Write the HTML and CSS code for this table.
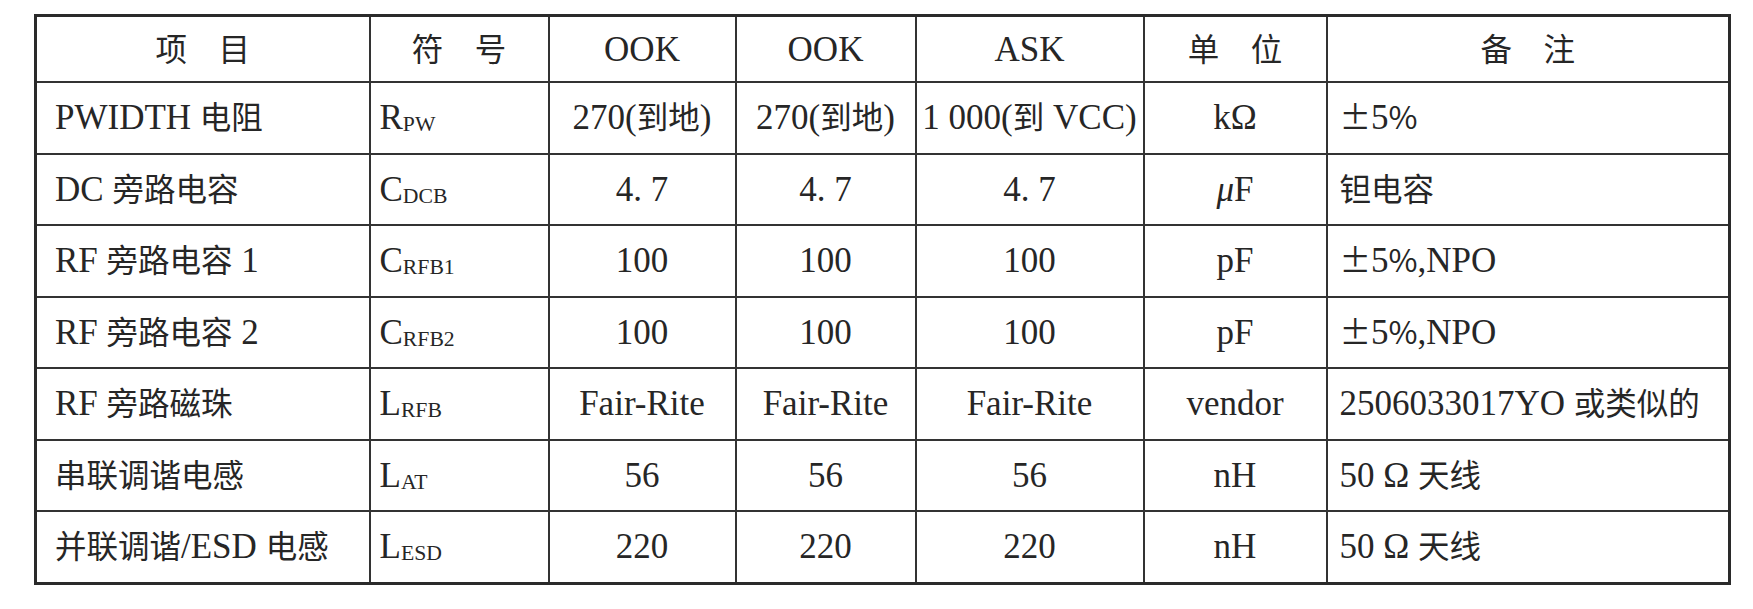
FILE: index.html
```html
<!DOCTYPE html>
<html lang="zh">
<head>
<meta charset="utf-8">
<link rel="stylesheet" href="styles.css">
</head>
<body>
<div class="sheet">
<table class="spec">
  <colgroup>
    <col class="c-item"><col class="c-sym"><col class="c-ook1"><col class="c-ook2"><col class="c-ask"><col class="c-unit"><col class="c-note">
  </colgroup>
  <thead>
    <tr class="head">
      <th><span class="zh">项　目</span></th><th><span class="zh">符　号</span></th><th>OOK</th><th>OOK</th><th>ASK</th><th><span class="zh">单　位</span></th><th><span class="zh">备　注</span></th>
    </tr>
  </thead>
  <tbody>
    <tr>
      <td class="item">PWIDTH <span class="zh">电阻</span></td><td class="sym">R<sub>PW</sub></td><td>270(<span class="zh">到地</span>)</td><td>270(<span class="zh">到地</span>)</td><td>1 000(<span class="zh">到</span> VCC)</td><td>kΩ</td><td class="note"><span class="zh">±</span>5<span class="zh">%</span></td>
    </tr>
    <tr>
      <td class="item">DC <span class="zh">旁路电容</span></td><td class="sym">C<sub>DCB</sub></td><td>4. 7</td><td>4. 7</td><td>4. 7</td><td><i class="mu">μ</i>F</td><td class="note"><span class="zh">钽电容</span></td>
    </tr>
    <tr>
      <td class="item">RF <span class="zh">旁路电容</span> 1</td><td class="sym">C<sub>RFB1</sub></td><td>100</td><td>100</td><td>100</td><td>pF</td><td class="note"><span class="zh">±</span>5<span class="zh">%</span>,NPO</td>
    </tr>
    <tr>
      <td class="item">RF <span class="zh">旁路电容</span> 2</td><td class="sym">C<sub>RFB2</sub></td><td>100</td><td>100</td><td>100</td><td>pF</td><td class="note"><span class="zh">±</span>5<span class="zh">%</span>,NPO</td>
    </tr>
    <tr>
      <td class="item">RF <span class="zh">旁路磁珠</span></td><td class="sym">L<sub>RFB</sub></td><td>Fair-Rite</td><td>Fair-Rite</td><td>Fair-Rite</td><td>vendor</td><td class="note">2506033017YO <span class="zh">或类似的</span></td>
    </tr>
    <tr>
      <td class="item"><span class="zh">串联调谐电感</span></td><td class="sym">L<sub>AT</sub></td><td>56</td><td>56</td><td>56</td><td>nH</td><td class="note">50 Ω <span class="zh">天线</span></td>
    </tr>
    <tr>
      <td class="item"><span class="zh">并联调谐</span>/ESD <span class="zh">电感</span></td><td class="sym">L<sub>ESD</sub></td><td>220</td><td>220</td><td>220</td><td>nH</td><td class="note">50 Ω <span class="zh">天线</span></td>
    </tr>
  </tbody>
</table>
</div>
</body>
</html>
```
FILE: styles.css
```css
html, body {
  margin: 0;
  padding: 0;
  background: #ffffff;
}
.sheet {
  padding: 14px 0 0 34px;
}
.spec {
  border-collapse: collapse;
  table-layout: fixed;
  width: 1694px;
  border: 3px solid #2a2a2a;
  font-family: "Liberation Serif", "Noto Sans CJK SC", serif;
  font-size: 35px;
  color: #262626;
}
.c-item { width: 334px; }
.c-sym { width: 179px; }
.c-ook1 { width: 187px; }
.c-ook2 { width: 180px; }
.c-ask { width: 228px; }
.c-unit { width: 183px; }
.c-note { width: 403px; }
.spec th,
.spec td {
  border: 2px solid #333333;
  padding: 0;
  text-align: center;
  vertical-align: middle;
  white-space: nowrap;
  font-weight: normal;
  line-height: 1;
}
.spec .head th {
  height: 64px;
}
.spec td {
  height: 69.5px;
}
.spec td.item {
  text-align: left;
  padding-left: 18px;
}
.spec td.sym {
  text-align: left;
  padding-left: 9px;
}
.spec td.note {
  text-align: left;
  padding-left: 12px;
}
.zh {
  font-family: "Noto Sans CJK SC", "Liberation Serif", sans-serif;
  font-size: 0.9em;
}
.spec sub {
  font-size: 0.62em;
  vertical-align: -0.08em;
}
.mu {
  font-style: italic;
}
```
